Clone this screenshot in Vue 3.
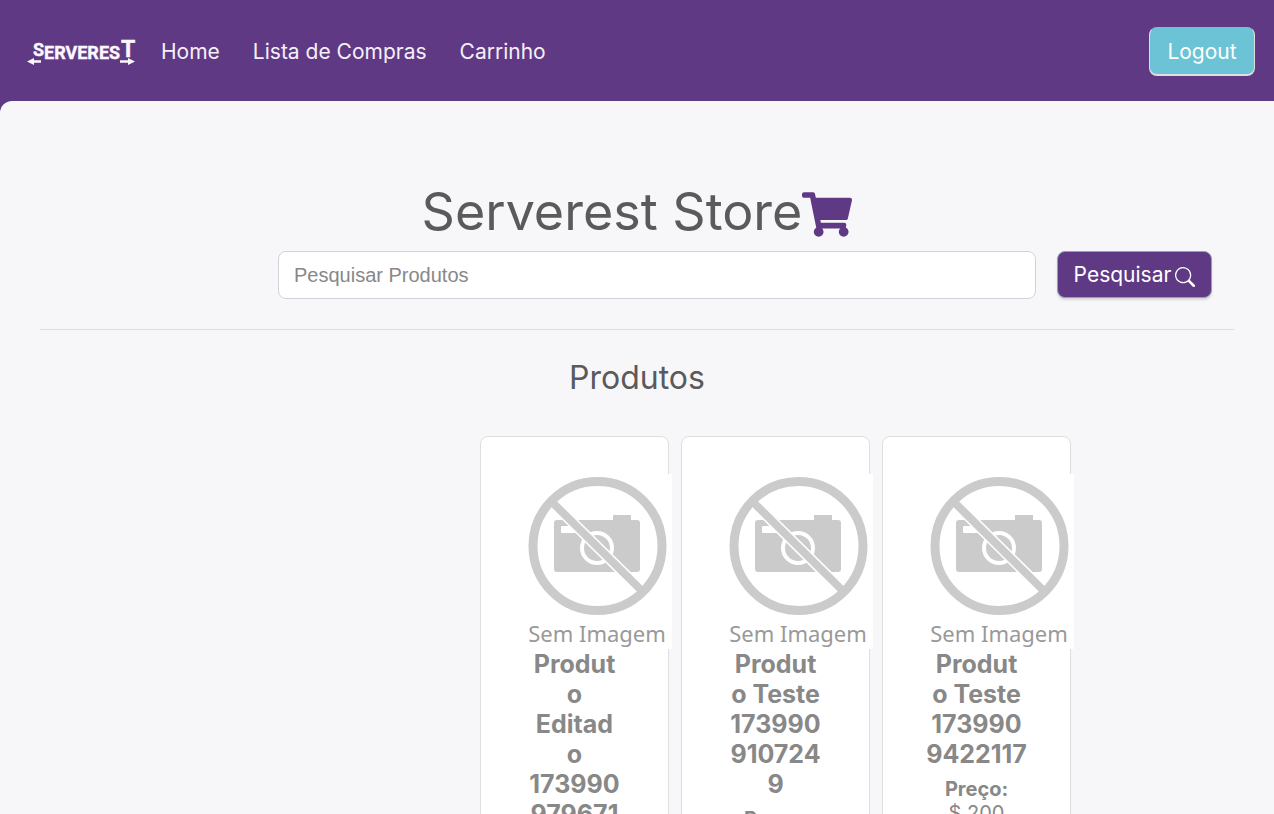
<script setup>
import { ref } from 'vue'

const search = ref('')
const links = ['Home', 'Lista de Compras', 'Carrinho']
const products = [
  { id: 1, name: ['Produt', 'o', 'Editad', 'o', '173990', '979671'] },
  { id: 2, name: ['Produt', 'o Teste', '173990', '910724', '9'], label: 'Preço:' },
  { id: 3, name: ['Produt', 'o Teste', '173990', '9422117'], label: 'Preço:', price: '$ 200' }
]
</script>

<template>
  <div class="page">
    <header class="navbar">
      <a href="#" class="brand" aria-label="Serverest">
        <svg width="112" height="36" viewBox="0 0 112 36">
          <text class="wordmark" y="25"><tspan x="6" dy="-3">S</tspan><tspan x="17" dy="3">ERVERES</tspan></text>
          <text class="wordmark tall" x="94" y="23">T</text>
          <path d="M0 27.500l7-3.500v2.300h7v2.400H7V31zM108 27.500l-7-3.500v2.300h-8v2.400h8V31z" />
        </svg>
      </a>
      <nav class="links">
        <a v-for="l in links" :key="l" href="#">{{ l }}</a>
      </nav>
      <button type="button" class="btn logout">Logout</button>
    </header>

    <main class="content">
      <h1>
        <span>Serverest Store</span>
        <svg width="50" height="45" viewBox="0 0 576 512" aria-hidden="true">
          <path d="M528.12 301.319l47.273-208C578.806 78.301 567.391 64 551.99 64H159.208l-9.166-44.81C147.758 8.021 137.93 0 126.529 0H24C10.745 0 0 10.745 0 24v16c0 13.255 10.745 24 24 24h69.883l70.248 343.435C147.325 417.1 136 435.222 136 456c0 30.928 25.072 56 56 56s56-25.072 56-56c0-15.674-6.447-29.835-16.824-40h209.647C430.447 426.165 424 440.326 424 456c0 30.928 25.072 56 56 56s56-25.072 56-56c0-22.172-12.888-41.332-31.579-50.405l5.517-24.276c3.413-15.018-8.002-29.319-23.403-29.319H218.117l-6.545-32h293.145c11.206 0 20.92-7.754 23.403-18.681z" />
        </svg>
      </h1>

      <form class="search" @submit.prevent>
        <input v-model="search" type="text" placeholder="Pesquisar Produtos" aria-label="Pesquisar Produtos" />
        <button type="submit" class="btn find">
          Pesquisar
          <svg width="20" height="20" viewBox="0 0 16 16" aria-hidden="true">
            <path d="M11.742 10.344a6.5 6.5 0 1 0-1.397 1.398h-.001c.03.04.062.078.098.115l3.85 3.85a1 1 0 0 0 1.415-1.414l-3.85-3.85a1.007 1.007 0 0 0-.115-.1zM12 6.5a5.500 5.500 0 1 1-11 0 5.500 5.500 0 0 1 11 0z" />
          </svg>
        </button>
      </form>

      <hr />
      <h2>Produtos</h2>

      <section class="cards">
        <article v-for="p in products" :key="p.id" class="card">
          <svg class="photo" width="144" height="175" viewBox="0 0 144 175" role="img" aria-label="Sem Imagem">
            <rect width="144" height="175" fill="#fff" />
            <path fill="#cbcbcb" d="M29 46h56v-5h18v5h6q3 0 3 3v46q0 3-3 3H29q-3 0-3-3V49q0-3 3-3z" />
            <path fill="#fff" d="M33 53q0-1 1-1h16v7H34q-1 0-1-1z" />
            <circle cx="69" cy="74" r="15" fill="none" stroke="#fff" stroke-width="4" />
            <path d="M23 27L114 117" stroke="#fff" stroke-width="11" />
            <path d="M23 27L114 117" stroke="#cbcbcb" stroke-width="8" />
            <circle cx="69.500" cy="72" r="64.500" fill="none" stroke="#cbcbcb" stroke-width="9" />
            <text class="caption" x="69" y="168" text-anchor="middle">Sem Imagem</text>
          </svg>
          <h3><span v-for="(line, i) in p.name" :key="i">{{ line }}</span></h3>
          <p v-if="p.label" class="label">{{ p.label }}</p>
          <p v-if="p.price" class="price">{{ p.price }}</p>
        </article>
      </section>
    </main>
  </div>
</template>

<style>
body {
  margin: 0;
  background: #603985;
}
</style>

<style scoped>
.page {
  height: 100vh;
  overflow: hidden;
  display: flex;
  flex-direction: column;
  font-family: Inter, sans-serif;
  font-size: 20px;
  color: #888;
}
.navbar {
  display: flex;
  align-items: center;
  flex: none;
  height: 101px;
  box-sizing: border-box;
  padding: 2px 19px 0 27px;
  background: #603985;
}
.brand {
  display: flex;
  fill: #fbf8fd;
}
.wordmark {
  font: bold 18px Roboto, sans-serif;
  stroke: #fbf8fd;
  stroke-width: 0.4;
}
.tall {
  font-size: 23px;
}
.links {
  display: flex;
  gap: 33px;
  margin-left: 22px;
}
.links a {
  color: #f5f0f8;
  font-size: 21px;
  text-decoration: none;
}
.btn {
  font: 21px Inter, sans-serif;
  color: #fff;
  border-radius: 8px;
  display: flex;
  align-items: center;
  justify-content: center;
  box-sizing: border-box;
  white-space: nowrap;
  padding: 0;
}
.logout {
  margin-left: auto;
  width: 106px;
  height: 49px;
  background: #6cc3d5;
  border: 1px solid #dfdfe0;
  border-top-color: #6cc3d5;
  border-bottom-width: 2px;
}
.content {
  flex: 1 0 auto;
  padding: 78px 40px 0;
  background: #f7f7fa;
  border-radius: 12px 0 0 0;
}
h1,
h2,
h3,
p {
  margin: 0;
}
h1 {
  display: flex;
  justify-content: center;
  align-items: center;
  height: 64px;
  margin-bottom: 8px;
  font-size: 52px;
  font-weight: 400;
  color: #5a5a5a;
}
h1 svg {
  fill: #603985;
  align-self: flex-end;
  margin-bottom: 6px;
}
.search {
  display: flex;
  align-items: flex-start;
  gap: 21px;
  margin: 0 22px 0 238px;
}
.search input {
  flex: 1;
  min-width: 0;
  box-sizing: border-box;
  height: 48px;
  padding: 0 15px;
  border: 1px solid #ced4da;
  border-radius: 8px;
  background: #fff;
  font: 20px "Liberation Sans", Arial, sans-serif;
  color: #555;
}
.search input::placeholder {
  color: #888;
  opacity: 1;
}
.find {
  width: 155px;
  height: 47px;
  gap: 4px;
  background: #603985;
  border: 1px solid #78b0ae;
  box-shadow: 0 2px 2px #d8d8dc;
}
.find svg {
  fill: #fff;
  margin-top: 4px;
}
hr {
  margin: 30px 0;
  border: 0;
  border-top: 1px solid #dddde0;
}
h2 {
  font-size: 32px;
  line-height: 36px;
  font-weight: 400;
  text-align: center;
  color: #5a5a5a;
}
.cards {
  display: grid;
  grid-template-columns: repeat(3, 1fr);
  gap: 12px;
  margin: 40px 163px 0 440px;
}
.card {
  box-sizing: border-box;
  min-width: 0;
  padding: 37px 47px;
  background: #fff;
  border: 1px solid #dfdfe0;
  border-radius: 8px;
  text-align: center;
}
.photo {
  display: block;
}
.caption {
  font: 22px "Noto Sans", sans-serif;
  fill: #999;
}
h3 {
  display: flex;
  flex-direction: column;
  align-items: center;
  margin-bottom: 8px;
  font-size: 25px;
  line-height: 30px;
  font-weight: 700;
  white-space: nowrap;
}
.label,
.price {
  line-height: 24px;
}
.label {
  font-weight: 700;
}
</style>
